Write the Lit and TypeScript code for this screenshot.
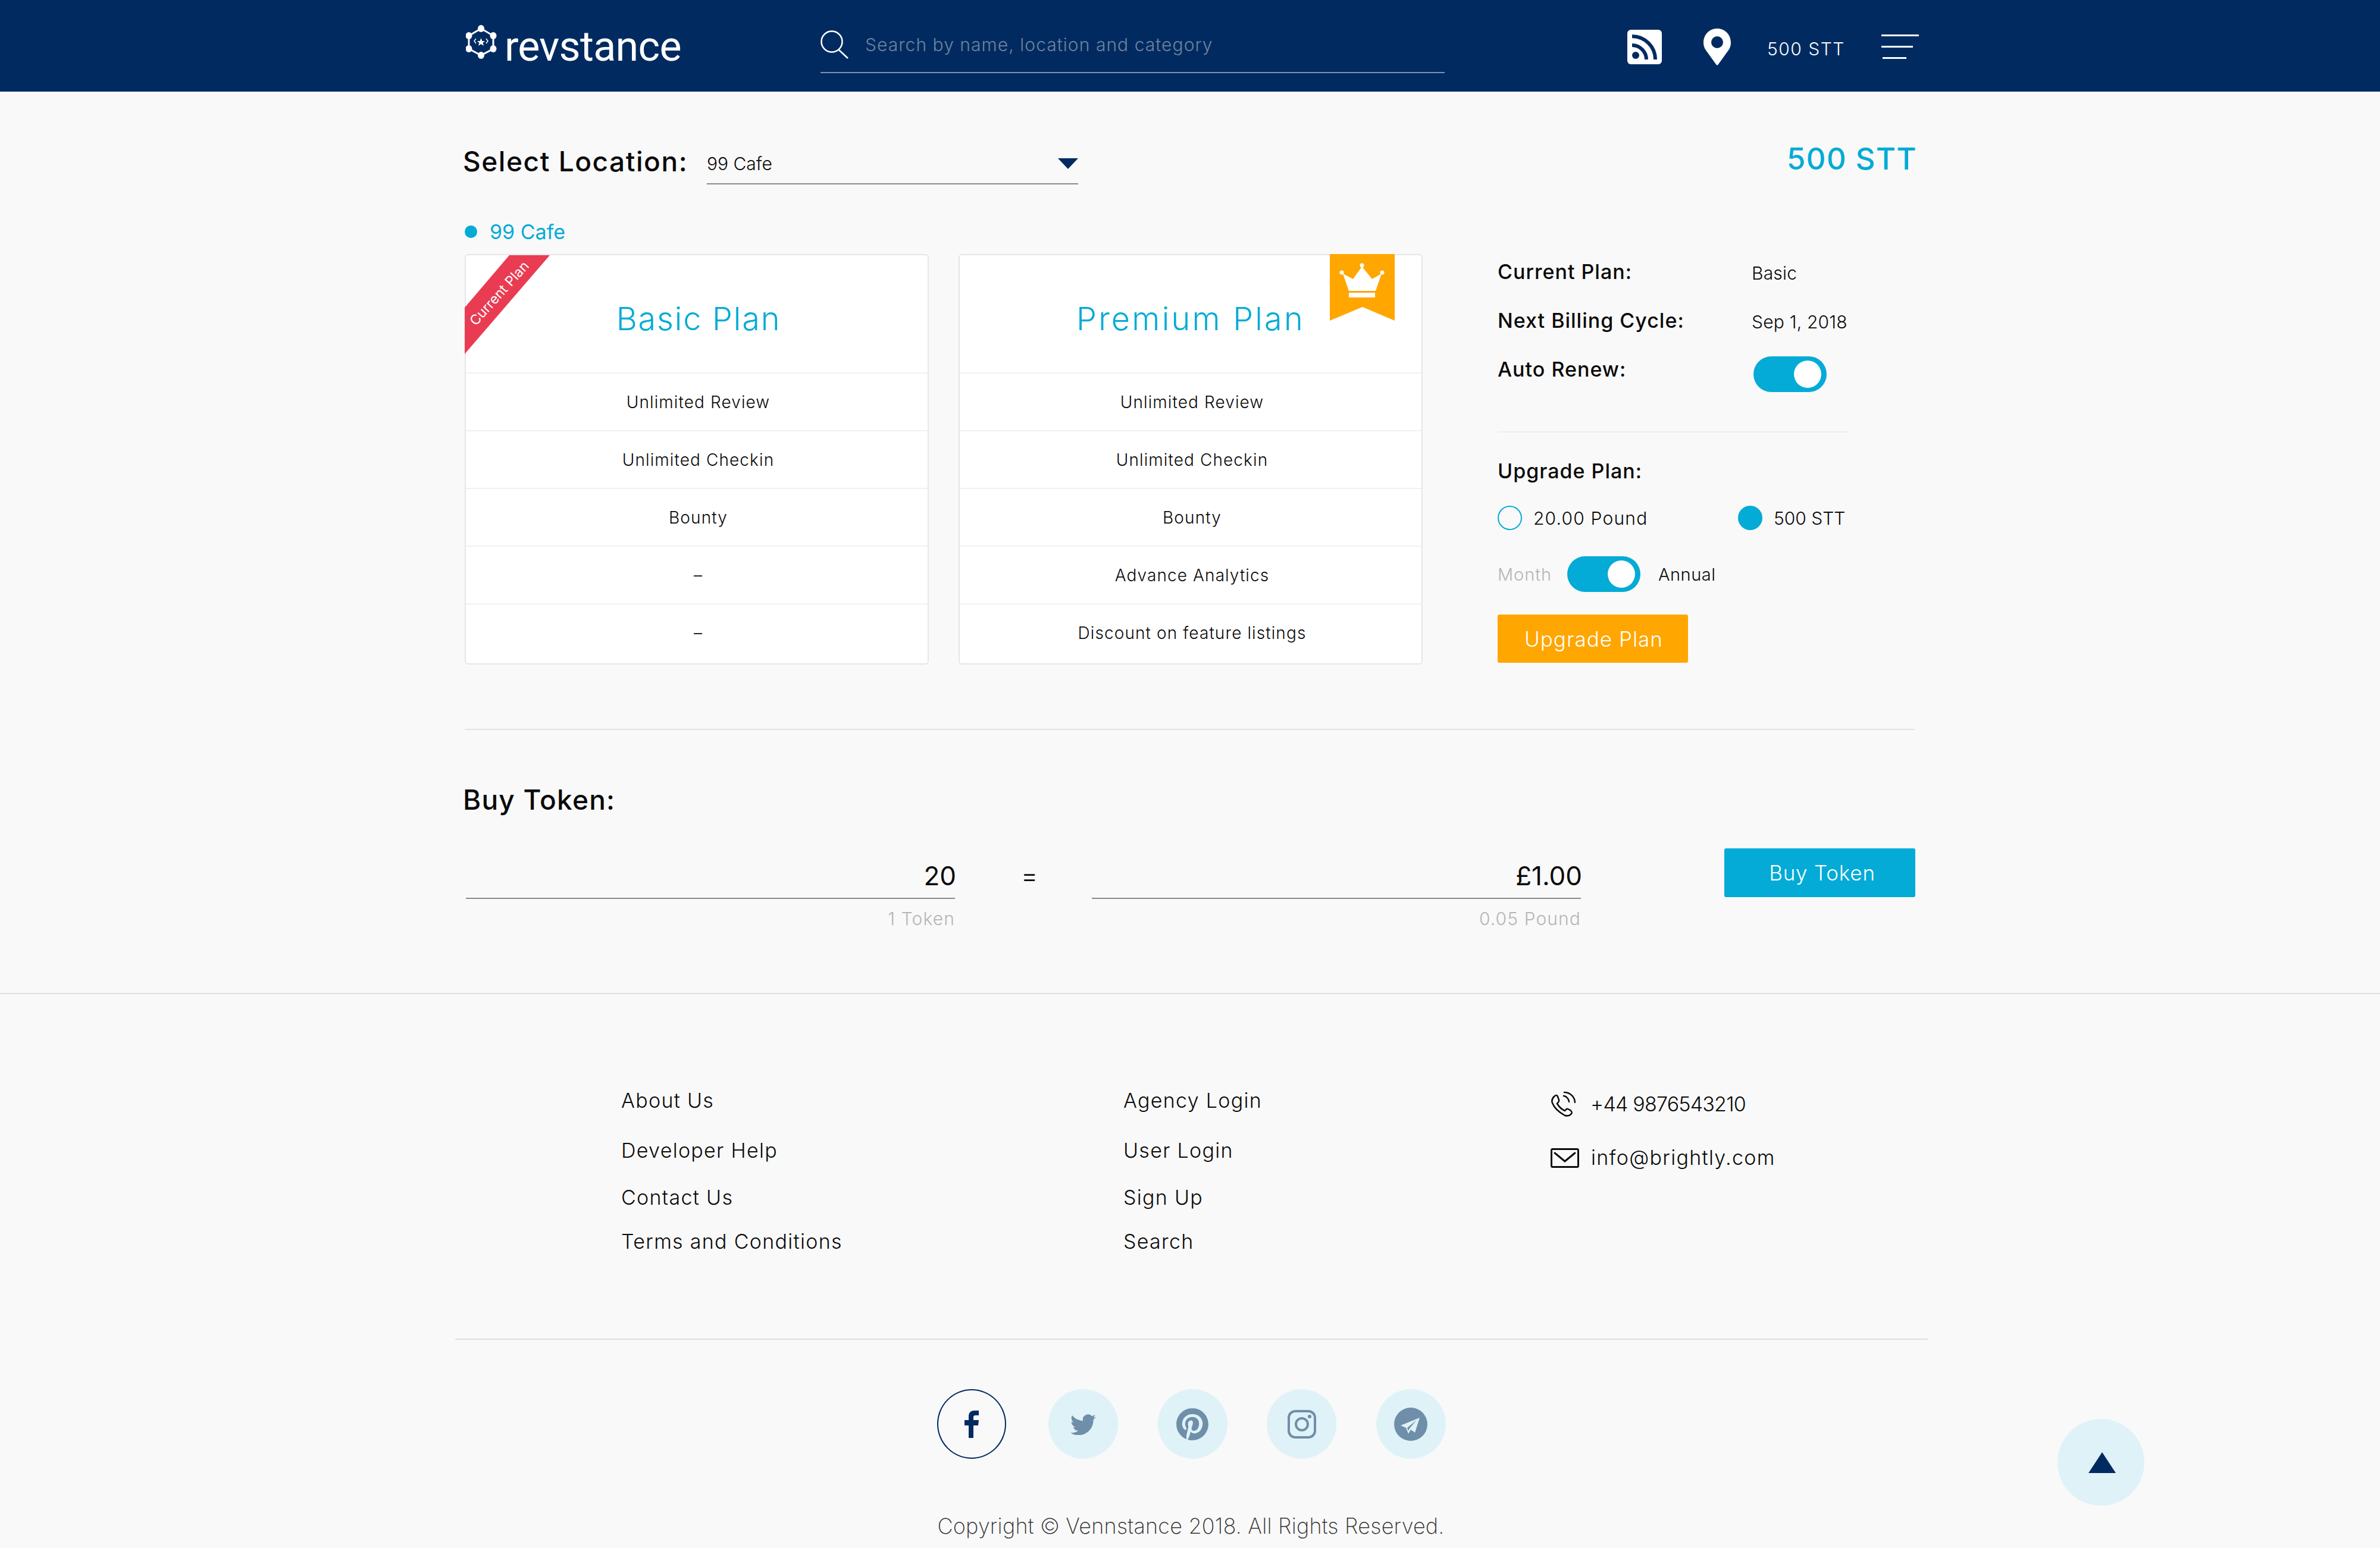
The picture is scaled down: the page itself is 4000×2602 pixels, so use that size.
import { html, css, LitElement, svg } from "lit";
import { customElement } from "lit/decorators.js";

const basicRows = ["Unlimited Review", "Unlimited Checkin", "Bounty", "–", "–"];
const premiumRows = ["Unlimited Review", "Unlimited Checkin", "Bounty", "Advance Analytics", "Discount on feature listings"];
const linksA = ["About Us", "Developer Help", "Contact Us", "Terms and Conditions"];
const linksB = ["Agency Login", "User Login", "Sign Up", "Search"];

const logoIcon = svg`<svg width="52" height="57" viewBox="0 0 52 57">
  <polygon points="25.500,6 46,18 46,40 25.500,51 5,40 5,18" fill="none" stroke="#fff" stroke-width="3" />
  <g fill="#fff">
    <ellipse cx="25.500" cy="6" rx="5.500" ry="6" /><ellipse cx="46" cy="18" rx="5.500" ry="6" />
    <ellipse cx="46" cy="40" rx="5.500" ry="6" /><ellipse cx="25.500" cy="51" rx="5.500" ry="6" />
    <ellipse cx="5" cy="40" rx="5.500" ry="6" /><ellipse cx="5" cy="18" rx="5.500" ry="6" />
    <polygon points="25.500,22 27.500,27 32,27 28.500,30 30,35 25.500,32 21,35 22.500,30 19,27 23.500,27" />
  </g>
  <path d="M17 23l-3 4 3 4M34 23l3 4-3 4" fill="none" stroke="#fff" stroke-width="1.500" />
</svg>`;

const searchIcon = svg`<svg width="47" height="48" viewBox="0 0 47 48" fill="none" stroke="#fff" stroke-width="2.500">
  <circle cx="19" cy="19" r="17.500" /><line x1="31" y1="33" x2="46" y2="47" />
</svg>`;

const rssIcon = svg`<svg width="58" height="58" viewBox="0 0 58 58">
  <rect width="58" height="58" rx="6" fill="#fff" />
  <g fill="none" stroke="#012b60" stroke-width="6">
    <path d="M8 11A39 39 0 0 1 47 50" /><path d="M8 26A24 24 0 0 1 32 50" />
  </g>
  <circle cx="14" cy="43" r="6" fill="#012b60" />
</svg>`;

const pinIcon = svg`<svg width="46" height="62" viewBox="0 0 46 62">
  <path fill="#fff" fill-rule="evenodd" d="M23 0C10 0 0 10 0 24C0 28 1 31 3 35L21 60Q23 63 25 60L43 35C45 31 46 28 46 24C46 10 36 0 23 0ZM23 13A10 10 0 1 1 23 33A10 10 0 1 1 23 13Z" />
</svg>`;

const caret = svg`<svg width="34" height="18" viewBox="0 0 34 18"><polygon points="0,0 34,0 17,18" fill="#012b60" /></svg>`;

const ribbon = svg`<svg class="ribbon" width="143" height="168" viewBox="0 0 143 168">
  <polygon points="75,2 143,2 0,168 0,90" fill="#e93c53" />
  <text class="ribbon-text" x="58" y="74" text-anchor="middle" transform="rotate(-48 58 66)">Current Plan</text>
</svg>`;

const crownBadge = svg`<svg class="badge" width="109" height="112" viewBox="0 0 109 112">
  <polygon points="0,0 109,0 109,112 55,89 0,112" fill="#ffa600" />
  <g transform="translate(17 16)" fill="#fff">
    <circle cx="37" cy="3" r="3.500" /><circle cx="3" cy="15" r="3.500" /><circle cx="71" cy="15" r="3.500" />
    <polygon points="5,17 22,26 37,5 54,26 70,17 60,46 15,46" />
    <rect x="15" y="49" width="44" height="8" />
  </g>
</svg>`;

const phoneIcon = svg`<svg width="42" height="42" viewBox="0 0 42 42" fill="none" stroke="#0a0a0a" stroke-width="2.500" stroke-linecap="round">
  <path d="M6 8C3 11 1 14 3 19C7 29 15 35 24 40C28 41 32 41 35 37C37 34 35 33 33 31L29 29C27 28 26 30 24 32C19 30 14 25 11 20C13 18 15 16 14 14L12 8C10 5 8 6 6 8Z" />
  <path d="M22 7A11 11 0 0 1 31 17" /><path d="M23 1A18 18 0 0 1 41 18" />
</svg>`;

const mailIcon = svg`<svg width="48" height="33" viewBox="0 0 48 33" fill="none" stroke="#0a0a0a" stroke-width="3">
  <rect x="1.500" y="1.500" width="45" height="30" rx="2" /><path d="M7 8L24 22L41 8" stroke-linecap="round" />
</svg>`;

const fbIcon = svg`<svg width="24" height="46" viewBox="0 0 24 46"><path fill="#012b60" d="M7 46V25H0V16H7V10C7 3 11 0 17 0H24V8H19C16 8 15 9 15 12V16H24L23 25H15V46Z" /></svg>`;

const twIcon = svg`<svg width="43" height="36" viewBox="0 1.500 24 20"><path fill="#6f8eaa" d="M23.953 4.570a10 10 0 01-2.825.775 4.958 4.958 0 002.163-2.723c-.951.555-2.005.959-3.127 1.184a4.920 4.920 0 00-8.384 4.482C7.690 8.095 4.067 6.130 1.640 3.162a4.822 4.822 0 00-.666 2.475c0 1.710.870 3.213 2.188 4.096a4.904 4.904 0 01-2.228-.616v.060a4.923 4.923 0 003.946 4.827 4.996 4.996 0 01-2.212.085 4.936 4.936 0 004.604 3.417 9.867 9.867 0 01-6.102 2.105c-.390 0-.779-.023-1.170-.067a13.995 13.995 0 007.557 2.209c9.053 0 13.998-7.496 13.998-13.985 0-.210 0-.420-.015-.630A9.935 9.935 0 0024 4.590z" /></svg>`;

const pinterestIcon = svg`<svg width="54" height="54" viewBox="0 0 24 24"><path fill="#6f8eaa" d="M12.017 0C5.396 0 .029 5.367.029 11.987c0 5.079 3.158 9.417 7.618 11.162-.105-.949-.199-2.403.041-3.439.219-.937 1.406-5.957 1.406-5.957s-.359-.720-.359-1.781c0-1.663.967-2.911 2.168-2.911 1.024 0 1.518.769 1.518 1.688 0 1.029-.653 2.567-.992 3.992-.285 1.193.600 2.165 1.775 2.165 2.128 0 3.768-2.245 3.768-5.487 0-2.861-2.063-4.869-5.008-4.869-3.410 0-5.409 2.562-5.409 5.199 0 1.033.394 2.143.889 2.741.099.120.112.225.085.345-.090.375-.293 1.199-.334 1.363-.053.225-.172.271-.401.165-1.495-.690-2.433-2.878-2.433-4.646 0-3.776 2.748-7.252 7.920-7.252 4.158 0 7.392 2.967 7.392 6.923 0 4.135-2.607 7.462-6.233 7.462-1.214 0-2.354-.629-2.758-1.379l-.749 2.848c-.269 1.045-1.004 2.352-1.498 3.146 1.123.345 2.306.535 3.550.535 6.607 0 11.985-5.365 11.985-11.987C23.970 5.390 18.592.026 11.985.026L12.017 0z" /></svg>`;

const igIcon = svg`<svg width="48" height="48" viewBox="0 0 48 48" fill="none" stroke="#6f8eaa" stroke-width="4">
  <rect x="2" y="2" width="44" height="44" rx="11" /><circle cx="24" cy="24" r="10" />
  <circle cx="37" cy="11" r="3" fill="#6f8eaa" stroke="none" />
</svg>`;

const tgIcon = svg`<svg width="56" height="56" viewBox="0 0 56 56">
  <circle cx="28" cy="28" r="28" fill="#6f8eaa" />
  <path fill="#dff2f7" d="M43 17L11 30L20 34L24 44L28 37L35 42ZM22 34L38 21L26 35L24 39Z" fill-rule="evenodd" />
</svg>`;

const socials = [fbIcon, twIcon, pinterestIcon, igIcon, tgIcon];

@customElement("app-root")
export class AppRoot extends LitElement {
  static styles = css`
    :host {
      display: block;
      position: relative;
      width: 4000px;
      height: 2602px;
      overflow: hidden;
      background: #f9f9f9;
      color: #0a0a0a;
      font-family: Inter, "Open Sans", sans-serif;
      font-weight: 300;
    }
    svg { display: block; flex: none; }

    /* header */
    header {
      height: 154px;
      background: #012b60;
      box-sizing: border-box;
      display: flex;
      align-items: center;
      padding-left: 783px;
      color: #fff;
    }
    .logo { display: flex; width: 596px; align-items: flex-start; margin-top: -6px; }
    .logo-text {
      font-family: Roboto, sans-serif;
      font-weight: 400;
      font-size: 70px;
      line-height: 57px;
      margin: 8px 0 0 13px;
      letter-spacing: -0.7px;
    }
    .search {
      width: 1049px;
      height: 76px;
      margin-top: 16px;
      border-bottom: 2px solid #7c93b3;
      display: flex;
      align-items: center;
      box-sizing: border-box;
      padding-bottom: 18px;
    }
    .search span {
      margin-left: 28px;
      font-size: 30px;
      color: #6f83a2;
      letter-spacing: 1.050px;
    }
    .rss { margin: 4px 0 0 307px; }
    .pin { margin: 4px 0 0 70px; }
    .balance { margin-left: 61px; font-size: 30px; letter-spacing: 1.500px; width: 192px; padding-top: 10px; }
    .menu { display: flex; flex-direction: column; gap: 16px; width: 63px; margin-top: 2px; }
    .menu i { display: block; height: 3px; background: #fff; }
    .menu i:nth-child(2) { width: 53px; }
    .menu i:nth-child(3) { width: 40px; margin-left: 2px; }

    /* shared */
    .wrap { width: 2444px; margin: 0 auto; }
    .label { font-weight: 500; }

    /* select row */
    .top-row { display: flex; height: 70px; margin-top: 86px; }
    .top-label { font-size: 46px; font-weight: 500; width: 410px; line-height: 62px; letter-spacing: 1.550px; white-space: nowrap; }
    .select {
      width: 624px;
      height: 70px;
      box-sizing: border-box;
      border-bottom: 2px solid #8a8a8a;
      display: flex;
      justify-content: space-between;
      align-items: center;
      font-size: 30px;
      font-weight: 300;
      padding-top: 2px;
    }
    .stt { margin-left: auto; font-size: 51px; font-weight: 500; line-height: 54px; letter-spacing: 1.200px; color: #03abd6; }

    .loc { display: flex; align-items: center; height: 40px; margin-top: 59px; margin-left: 3px; font-size: 34px; font-weight: 400; color: #03abd6; }
    .loc i { width: 21px; height: 21px; border-radius: 50%; background: #03abd6; margin-right: 21px; }

    /* plans */
    .plans { display: flex; margin: 18px 0 0 3px; }
    .card {
      position: relative;
      width: 780px;
      height: 690px;
      box-sizing: border-box;
      border: 2px solid #e6e6e6;
      border-radius: 6px;
      background: #fff;
      display: flex;
      flex-direction: column;
    }
    .card + .card { margin-left: 50px; }
    .ribbon { position: absolute; left: -2px; top: -2px; }
    .ribbon-text { fill: #fff; font-size: 23px; font-weight: 400; font-family: Inter, sans-serif; }
    .badge { position: absolute; right: 45px; top: -2px; }
    .card-head {
      height: 197px;
      display: flex;
      align-items: center;
      justify-content: center;
      font-size: 54px;
      color: #03abd6;
      letter-spacing: 1.800px;
      padding: 16px 0 0 6px;
      box-sizing: border-box;
    }
    .premium .card-head { letter-spacing: 3.200px; padding-left: 0; }
    .row {
      flex: 1;
      border-top: 2px solid #f1f1f1;
      display: flex;
      align-items: center;
      justify-content: center;
      font-size: 28px;
      letter-spacing: 1.100px;
      padding-left: 5px;
    }
    .row:last-child { padding-bottom: 4px; }

    /* summary panel */
    aside { margin-left: 126px; width: 600px; font-size: 30px; }
    .info { display: flex; height: 60px; line-height: 60px; margin-bottom: 22px; }
    .info .label { width: 428px; font-size: 34px; letter-spacing: 1px; }
    .info .value { padding-top: 2px; letter-spacing: 0.2px; margin-left: -1px; }
    .toggle { width: 123px; height: 60px; border-radius: 30px; background: #03abd6; position: relative; flex: none; }
    .toggle::after {
      content: "";
      position: absolute;
      right: 9px;
      top: 7px;
      width: 46px;
      height: 46px;
      border-radius: 50%;
      background: #fff;
    }
    .auto .toggle { margin: 8px 0 0 2px; }
    .panel-hr { width: 591px; height: 2px; background: #eee; margin-top: 74px; }
    .upgrade-title { font-size: 34px; font-weight: 500; letter-spacing: 1px; line-height: 40px; margin-top: 45px; }
    .radios { display: flex; height: 41px; margin-top: 38px; align-items: center; font-size: 30px; }
    .radio { width: 41px; height: 41px; box-sizing: border-box; border-radius: 50%; border: 2px solid #03abd6; margin-right: 19px; flex: none; }
    .radio.on { background: #03abd6; }
    .opt { display: flex; align-items: center; }
    .opt:first-child { width: 404px; flex: none; letter-spacing: 1.200px; }
    .period { display: flex; align-items: center; height: 60px; margin-top: 44px; font-size: 29px; letter-spacing: 0.5px; }
    .period .off { color: #b5b5b5; width: 117px; letter-spacing: 1px; }
    .period .on { margin-left: 30px; }
    .upgrade-btn, .buy-btn {
      display: flex;
      align-items: center;
      justify-content: center;
      color: #fff;
      border-radius: 3px;
      font-size: 35px;
      letter-spacing: 1px;
      box-sizing: border-box;
    }
    .upgrade-btn { width: 320px; height: 81px; margin-top: 38px; background: #ffa600; padding-left: 3px; }

    .hr { height: 2px; background: #e2e2e2; }
    .hr.inner { width: 2438px; margin: 108px 0 0 3px; }

    /* buy token */
    .buy-title { font-size: 46px; font-weight: 500; line-height: 60px; margin-top: 87px; letter-spacing: 1.200px; }
    .buy-row { display: flex; margin-top: 52px; padding-left: 5px; height: 140px; }
    .field { width: 822px; }
    .field-value {
      height: 85px;
      box-sizing: border-box;
      border-bottom: 2px solid #8a8a8a;
      text-align: right;
      font-size: 44px;
      line-height: 60px;
      padding-top: 16px;
      font-weight: 400;
    }
    .field-value span { position: relative; left: 2px; }
    .field-sub { text-align: right; color: #b5b5b5; font-size: 30px; line-height: 40px; margin-top: 13px; letter-spacing: 1.100px; }
    .eq { width: 230px; box-sizing: border-box; padding: 16px 0 0 20px; text-align: center; font-size: 44px; line-height: 60px; }
    .buy-btn { width: 321px; height: 82px; margin-left: 241px; background: #03abd6; padding-left: 8px; letter-spacing: 0.8px; }

    /* footer */
    .hr.full { margin-top: 103px; background: #dfdfdf; }
    .foot-links { display: flex; padding: 159px 0 0 1044px; height: 579px; box-sizing: border-box; font-size: 34px; line-height: 40px; letter-spacing: 1.300px; font-weight: 300; }
    .col { width: 844px; display: grid; grid-template-rows: 84px 79px 74px 40px; align-content: start; }
    .col + .col { width: 718px; }
    .contact { display: flex; flex-direction: column; gap: 50px; margin-top: 6px; }
    .contact div { display: flex; align-items: center; height: 40px; }
    .contact span { margin-left: 25px; letter-spacing: -0.8px; }
    .contact .mail { margin-left: 20px; letter-spacing: 1.300px; }
    .hr.foot { width: 2475px; margin: 0 0 0 765px; background: #dfdfdf; }
    .socials { display: flex; gap: 66.500px; margin-top: 83px; padding-left: 1575px; }
    .social { width: 117px; height: 117px; border-radius: 50%; background: #dff2f7; display: flex; align-items: center; justify-content: center; box-sizing: border-box; }
    .social.active { background: none; border: 2px solid #012b60; margin-right: 4.500px; width: 116px; }
    .copy { text-align: center; margin-top: 88px; padding-left: 3px; font-size: 36px; line-height: 50px; font-weight: 200; color: #333; letter-spacing: 0.2px; }

    .to-top {
      position: absolute;
      left: 3458px;
      top: 2385px;
      width: 146px;
      height: 146px;
      border-radius: 50%;
      background: #dff2f7;
      display: flex;
      align-items: center;
      justify-content: center;
      box-sizing: border-box;
      padding-left: 4px;
    }
  `;

  private renderCard(title: string, rows: string[], extra: unknown, cls = "") {
    return html`<div class="card ${cls}">
      ${extra}
      <div class="card-head">${title}</div>
      ${rows.map((r) => html`<div class="row">${r}</div>`)}
    </div>`;
  }

  render() {
    return html`
      <header>
        <div class="logo">${logoIcon}<span class="logo-text">revstance</span></div>
        <div class="search">${searchIcon}<span>Search by name, location and category</span></div>
        <div class="rss">${rssIcon}</div>
        <div class="pin">${pinIcon}</div>
        <div class="balance">500 STT</div>
        <div class="menu"><i></i><i></i><i></i></div>
      </header>

      <div class="wrap">
        <div class="top-row">
          <div class="top-label">Select Location:</div>
          <div class="select"><span>99 Cafe</span>${caret}</div>
          <div class="stt">500 STT</div>
        </div>
        <div class="loc"><i></i>99 Cafe</div>

        <div class="plans">
          ${this.renderCard("Basic Plan", basicRows, ribbon)}
          ${this.renderCard("Premium Plan", premiumRows, crownBadge, "premium")}
          <aside>
            <div class="info"><span class="label">Current Plan:</span><span class="value">Basic</span></div>
            <div class="info"><span class="label">Next Billing Cycle:</span><span class="value">Sep 1, 2018</span></div>
            <div class="info auto"><span class="label">Auto Renew:</span><div class="toggle"></div></div>
            <div class="panel-hr"></div>
            <div class="upgrade-title">Upgrade Plan:</div>
            <div class="radios">
              <div class="opt"><div class="radio"></div>20.00 Pound</div>
              <div class="opt"><div class="radio on"></div>500 STT</div>
            </div>
            <div class="period"><span class="off">Month</span><div class="toggle"></div><span class="on">Annual</span></div>
            <div class="upgrade-btn">Upgrade Plan</div>
          </aside>
        </div>

        <div class="hr inner"></div>

        <div class="buy-title">Buy Token:</div>
        <div class="buy-row">
          <div class="field"><div class="field-value"><span>20</span></div><div class="field-sub">1 Token</div></div>
          <div class="eq">=</div>
          <div class="field"><div class="field-value"><span>£1.00</span></div><div class="field-sub">0.05 Pound</div></div>
          <div class="buy-btn">Buy Token</div>
        </div>
      </div>

      <div class="hr full"></div>

      <div class="foot-links">
        <div class="col">${linksA.map((l) => html`<span>${l}</span>`)}</div>
        <div class="col">${linksB.map((l) => html`<span>${l}</span>`)}</div>
        <div class="contact">
          <div>${phoneIcon}<span>+44 9876543210</span></div>
          <div>${mailIcon}<span class="mail">info@brightly.com</span></div>
        </div>
      </div>
      <div class="hr foot"></div>

      <div class="socials">
        ${socials.map((s, i) => html`<div class="social ${i === 0 ? "active" : ""}">${s}</div>`)}
      </div>
      <div class="copy">Copyright © Vennstance 2018. All Rights Reserved.</div>

      <div class="to-top">
        <svg width="46" height="35" viewBox="0 0 46 35"><polygon points="23,0 46,35 0,35" fill="#012b60" /></svg>
      </div>
    `;
  }
}
